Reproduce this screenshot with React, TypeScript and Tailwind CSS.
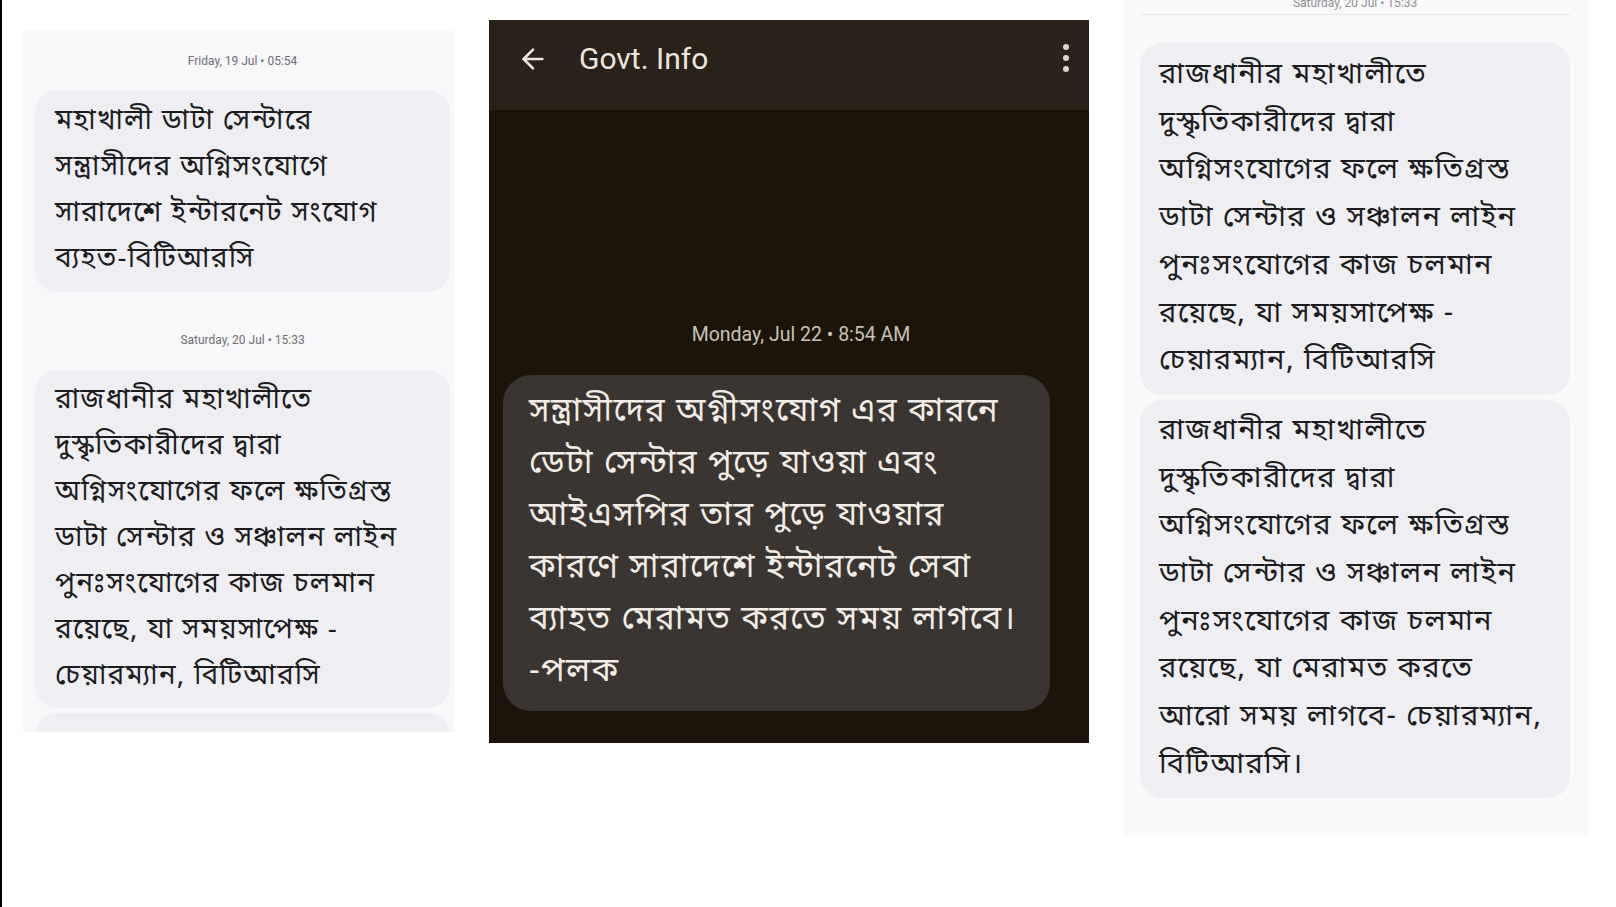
import { ArrowLeft } from "lucide-react"

const bn = "font-['Noto_Sans_Bengali','Noto_Sans','Lohit_Bengali',sans-serif]"

const leftFirst = ["মহাখালী ডাটা সেন্টারে", "সন্ত্রাসীদের অগ্নিসংযোগে", "সারাদেশে ইন্টারনেট সংযোগ", "ব্যহত-বিটিআরসি"]

const btrcLines = [
  "রাজধানীর মহাখালীতে",
  "দুস্কৃতিকারীদের দ্বারা",
  "অগ্নিসংযোগের ফলে ক্ষতিগ্রস্ত",
  "ডাটা সেন্টার ও সঞ্চালন লাইন",
  "পুনঃসংযোগের কাজ চলমান",
  "রয়েছে, যা সময়সাপেক্ষ -",
  "চেয়ারম্যান, বিটিআরসি",
]

const btrcLater = [
  "রাজধানীর মহাখালীতে",
  "দুস্কৃতিকারীদের দ্বারা",
  "অগ্নিসংযোগের ফলে ক্ষতিগ্রস্ত",
  "ডাটা সেন্টার ও সঞ্চালন লাইন",
  "পুনঃসংযোগের কাজ চলমান",
  "রয়েছে, যা মেরামত করতে",
  "আরো সময় লাগবে- চেয়ারম্যান,",
  "বিটিআরসি।",
]

const govtLines = [
  "সন্ত্রাসীদের অগ্নীসংযোগ এর কারনে",
  "ডেটা সেন্টার পুড়ে যাওয়া এবং",
  "আইএসপির তার পুড়ে যাওয়ার",
  "কারণে সারাদেশে ইন্টারনেট সেবা",
  "ব্যাহত মেরামত করতে সময় লাগবে।",
  "-পলক",
]

function LightBubble({ lines, className }: { lines: string[]; className: string }) {
  return (
    <div className={`rounded-[22px] bg-[#efeff3] text-[#1c1c1e] ${bn} ${className}`}>
      {lines.map((l, i) => (
        <div key={i} className="whitespace-nowrap">{l}</div>
      ))}
    </div>
  )
}

export default function App() {
  return (
    <div className="h-[907px] w-full overflow-hidden bg-white border-l-2 border-black flex items-start font-['Roboto',sans-serif]">
      {/* Left screenshot */}
      <div className="ml-[21px] mt-[31px] w-[431px] h-[701px] bg-[#f8f8fa] overflow-hidden pl-[12px] pr-[4px]">
        <div className="pt-[22px] text-center text-[12px] leading-[16px] text-[#6e6e73]">Friday, 19 Jul • 05:54</div>
        <LightBubble lines={leftFirst} className="mt-[21px] px-[20px] py-[9px] text-[28px] tracking-[1.2px] leading-[46px]" />
        <div className="mt-[40px] text-center text-[12px] leading-[16px] text-[#6e6e73]">Saturday, 20 Jul • 15:33</div>
        <LightBubble lines={btrcLines} className="mt-[22px] px-[20px] py-[8px] text-[28px] tracking-[1.2px] leading-[46px]" />
        <div className="mt-[5px] h-[60px] rounded-t-[22px] bg-[#efeff3]" />
      </div>

      {/* Middle screenshot */}
      <div className="ml-[35px] mt-[20px] w-[600px] h-[723px] bg-[#1d1409] flex flex-col">
        <div className="h-[90px] bg-[#2a2119] flex items-start pt-[22px] pl-[28px] pr-[18px]">
          <ArrowLeft className="mt-[1px] w-[32px] h-[32px] text-[#ece6df]" strokeWidth={2} />
          <div className="ml-[30px] text-[30px] leading-[34px] text-[#ece6df]">Govt. Info</div>
          <div className="ml-auto mt-[2px] flex flex-col gap-[5px] items-center w-[10px]">
            <span className="w-[6px] h-[6px] rounded-full bg-[#ddd6ce]" />
            <span className="w-[6px] h-[6px] rounded-full bg-[#ddd6ce]" />
            <span className="w-[6px] h-[6px] rounded-full bg-[#ddd6ce]" />
          </div>
        </div>
        <div className="mt-[213px] pl-[24px] text-center text-[19.5px] leading-[23px] text-[#c9c1b8]">Monday, Jul 22 • 8:54 AM</div>
        <div className={`mt-[29px] ml-[14px] w-[547px] rounded-[28px] bg-[#3b3531] text-[#f2ede6] px-[26px] py-[12px] text-[33px] tracking-[1.4px] leading-[52px] ${bn}`}>
          {govtLines.map((l, i) => (
            <div key={i} className="whitespace-nowrap">{l}</div>
          ))}
        </div>
      </div>

      {/* Right screenshot */}
      <div className="ml-[35px] w-[464px] h-[835px] bg-[#f9f9fa] pl-[16px] pr-[18px]">
        <div className="h-[15px] overflow-hidden border-b border-[#e6e6e9] flex justify-center">
          <div className="-mt-[5px] text-[12px] leading-[16px] text-[#8e8e93]">Saturday, 20 Jul • 15:33</div>
        </div>
        <LightBubble lines={btrcLines} className="mt-[28px] px-[19px] py-[9px] text-[29px] tracking-[1.4px] leading-[47.7px]" />
        <LightBubble lines={btrcLater} className="mt-[5px] px-[19px] py-[8px] text-[29px] tracking-[1.4px] leading-[47.7px]" />
      </div>
    </div>
  )
}
